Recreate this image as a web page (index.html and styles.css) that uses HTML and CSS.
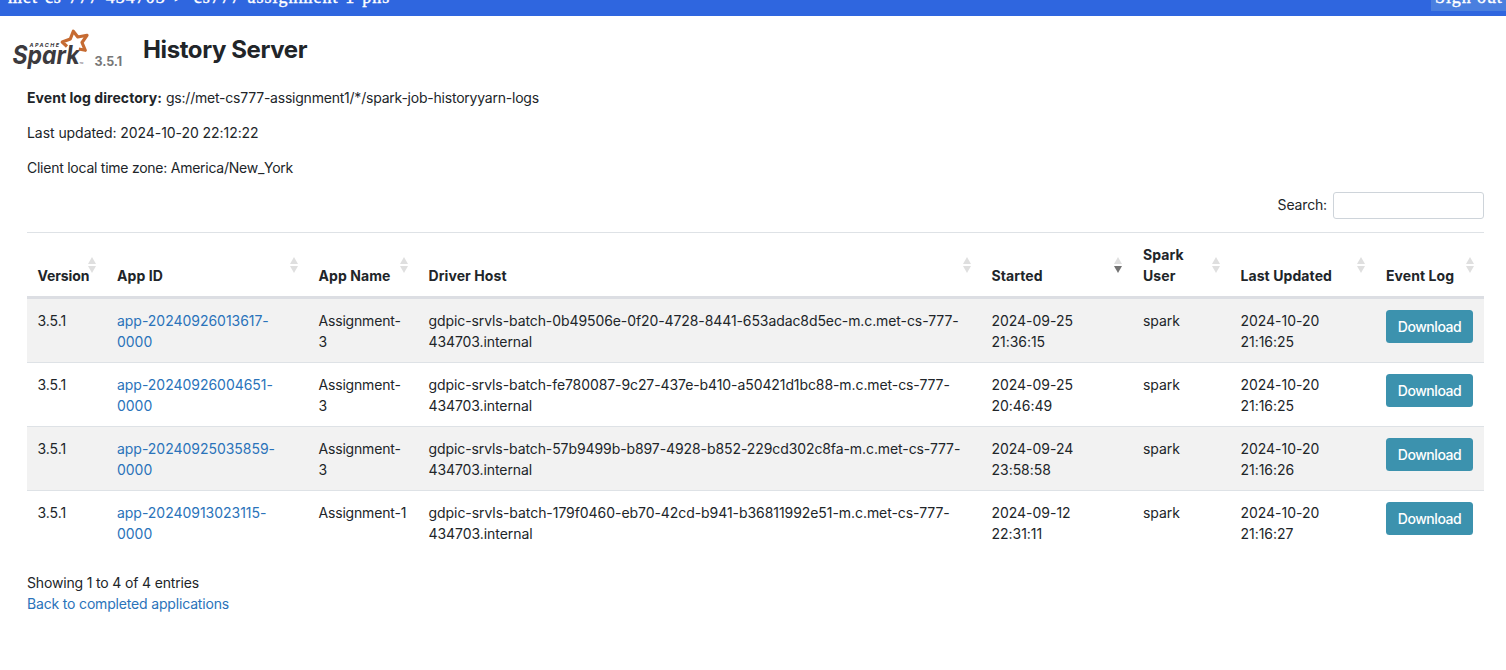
FILE: index.html
```
<!DOCTYPE html>
<html lang="en">
<head>
<meta charset="utf-8">
<title>History Server</title>
<link rel="stylesheet" href="styles.css">
</head>
<body>
<div class="topbar">
  <div class="crumbs">met-cs-777-434703 &gt; cs777-assignment-1-phs</div>
  <div class="signout">Sign out</div>
</div>
<header class="header">
  <svg class="logo" width="80" height="42" viewBox="0 0 80 42" aria-label="Apache Spark">
    <text class="apache" x="17.5" y="18.6" textLength="29.5">APACHE</text>
    <text class="spark" x="0.5" y="35.5" textLength="67" lengthAdjust="spacingAndGlyphs">Spark</text>
    <path class="star" d="M55 18.5 L50.2 14 L58.3 11 L61.3 3.2 L65.8 9 L75 7.3 L70 14.5 L73.3 22.3 L66.8 21"/>
    <text class="tm" x="67.5" y="36">TM</text>
  </svg>
  <span class="release">3.5.1</span>
  <h1 class="title">History Server</h1>
</header>
<main class="content">
  <p class="info"><strong>Event log directory:</strong> <span class="path">gs://met-cs777-assignment1/*/spark-job-historyyarn-logs</span></p>
  <p class="info updated">Last updated: 2024-10-20 22:12:22</p>
  <p class="info zone">Client local time zone: America/New_York</p>
  <label class="search"><span>Search:</span> <input type="text"></label>
  <table class="apps">
    <colgroup><col class="c1"><col class="c2"><col class="c3"><col class="c4"><col class="c5"><col class="c6"><col class="c7"><col class="c8"></colgroup>
    <thead>
      <tr><th>Version</th><th>App ID</th><th>App Name</th><th>Driver Host</th><th class="desc">Started</th><th>Spark<br>User</th><th>Last Updated</th><th>Event Log</th></tr>
    </thead>
    <tbody>
      <tr><td>3.5.1</td><td><a>app-20240926013617-<br>0000</a></td><td class="name">Assignment-<br>3</td><td class="host">gdpic-srvls-batch-0b49506e-0f20-4728-8441-653adac8d5ec-m.c.met-cs-777-<br>434703.internal</td><td>2024-09-25<br>21:36:15</td><td>spark</td><td>2024-10-20<br>21:16:25</td><td><a class="btn">Download</a></td></tr>
      <tr><td>3.5.1</td><td><a>app-20240926004651-<br>0000</a></td><td class="name">Assignment-<br>3</td><td class="host">gdpic-srvls-batch-fe780087-9c27-437e-b410-a50421d1bc88-m.c.met-cs-777-<br>434703.internal</td><td>2024-09-25<br>20:46:49</td><td>spark</td><td>2024-10-20<br>21:16:25</td><td><a class="btn">Download</a></td></tr>
      <tr><td>3.5.1</td><td><a>app-20240925035859-<br>0000</a></td><td class="name">Assignment-<br>3</td><td class="host">gdpic-srvls-batch-57b9499b-b897-4928-b852-229cd302c8fa-m.c.met-cs-777-<br>434703.internal</td><td>2024-09-24<br>23:58:58</td><td>spark</td><td>2024-10-20<br>21:16:26</td><td><a class="btn">Download</a></td></tr>
      <tr><td>3.5.1</td><td><a>app-20240913023115-<br>0000</a></td><td class="name">Assignment-1</td><td class="host last">gdpic-srvls-batch-179f0460-eb70-42cd-b941-b36811992e51-m.c.met-cs-777-<br>434703.internal</td><td>2024-09-12<br>22:31:11</td><td>spark</td><td>2024-10-20<br>21:16:27</td><td><a class="btn">Download</a></td></tr>
    </tbody>
  </table>
  <div class="summary">Showing 1 to 4 of 4 entries</div>
  <a class="back">Back to completed applications</a>
</main>
</body>
</html>
```
FILE: styles.css
```
* { box-sizing: border-box; }
body { margin: 0; background: #fff; color: #212529; font: 14px/21px Inter, "Liberation Sans", sans-serif; }
.topbar { height: 16px; overflow: hidden; background: #2f66df; color: #fff; display: flex; justify-content: space-between; align-items: flex-end; font: 18px/24px "Liberation Serif", serif; white-space: nowrap; -webkit-text-stroke: .4px #fff; }
.crumbs { padding: 0 0 0 8px; margin-bottom: 7px; letter-spacing: .98px; word-spacing: 3px; }
.signout { width: 75px; padding: 0 0 2px 4px; margin-bottom: 5px; background: #4a7fdf; letter-spacing: .9px; }
.header { display: flex; height: 68px; padding: 12px 0 0 12px; }
.logo { flex: none; }
.star { fill: none; stroke: #c66b32; stroke-width: 3.2; stroke-linejoin: round; }
.apache { font: italic 700 5.4px Inter, sans-serif; fill: #3c3a3e; }
.spark { font: italic 700 25px Inter, sans-serif; fill: #3c3a3e; }
.tm { font: 2.5px Inter, sans-serif; fill: #3c3a3e; }
.release { margin: 23px 0 0 2.5px; width: 29.5px; font-size: 12.5px; font-weight: 700; line-height: 21px; letter-spacing: -.1px; color: #777; }
.title { margin: 7px 0 0 19px; font-size: 24px; font-weight: 700; line-height: 30px; letter-spacing: -.4px; white-space: nowrap; }
.content { padding: 3px 22px 0 27px; }
.info { margin: 0 0 14px; }
.info strong { font-weight: 700; letter-spacing: .06px; }
.path { letter-spacing: -.22px; }
.updated { letter-spacing: -.06px; }
.zone { letter-spacing: -.25px; }
.search { display: flex; justify-content: flex-end; align-items: center; gap: 6px; height: 27px; margin-bottom: 13px; letter-spacing: -.15px; }
.search span { padding-bottom: 2px; }
.search input { width: 151px; height: 27px; border: 1px solid #ced4da; border-radius: 3px; background: #fff; }
.apps { width: 1457px; table-layout: fixed; border-collapse: separate; border-spacing: 0; white-space: nowrap; }
.c1 { width: 79.5px; } .c2 { width: 201.5px; } .c3 { width: 110px; } .c4 { width: 563px; }
.c5 { width: 151.5px; } .c6 { width: 97.5px; } .c7 { width: 145.5px; } .c8 { width: 108.5px; }
th, td { padding: 10.5px; border-top: 1px solid #dee2e6; text-align: left; letter-spacing: -.03px; }
th { vertical-align: bottom; font-weight: 700; height: 67px; border-bottom: 3px solid #dcdee3; position: relative; letter-spacing: .08px; }
th:first-child { letter-spacing: -.1px; }
th::before, th::after { content: ""; position: absolute; right: 10.5px; border: 4px solid transparent; }
th::before { top: 20px; border-bottom: 7px solid #dfdfdf; }
th::after { top: 33px; border-top: 7px solid #dfdfdf; }
th.desc::after { border-top-color: #737373; }
td { height: 64px; vertical-align: top; }
td.name { letter-spacing: -.18px; }
td.host { letter-spacing: -.09px; }
td.last { letter-spacing: -.06px; }
tbody tr:first-child td { border-top: 0; height: 63px; padding-top: 11px; padding-bottom: 10px; }
tbody tr:nth-child(odd) { background: #f2f2f2; }
a { color: #2a73ba; }
.btn { display: block; width: 87px; height: 33px; border-radius: 3.5px; background: #3c92ae; color: #fff; text-align: center; line-height: 33px; font-weight: 500; letter-spacing: -.45px; }
.summary { margin-top: 18px; letter-spacing: -.16px; }
.back { display: block; letter-spacing: -.17px; }
```
